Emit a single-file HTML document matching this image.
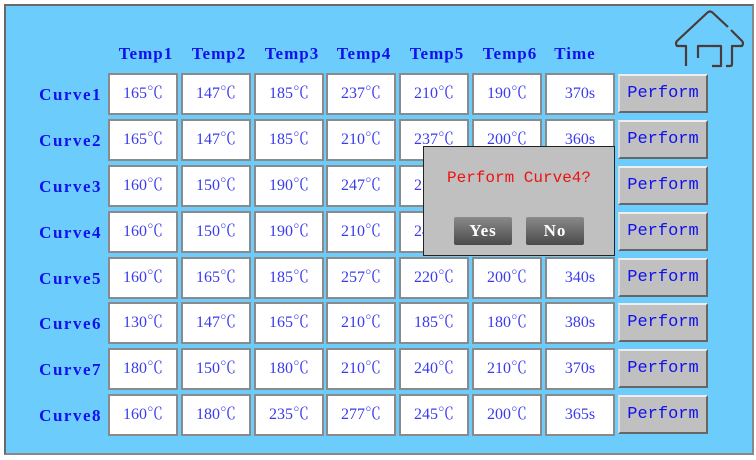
<!DOCTYPE html>
<html><head><meta charset="utf-8"><style>
body{margin:0;width:756px;height:460px;background:#fff;position:relative;overflow:hidden;font-family:"Liberation Serif","Noto Serif CJK SC",serif}
.frame{position:absolute;left:4px;top:4px;width:746px;height:447px;background:#6ccdfd;border:2px solid #6a6a6a;border-right-color:#888;border-bottom-color:#888}
.h{position:absolute;top:44px;width:70px;text-align:center;color:#1010ee;font-weight:bold;font-size:17px;letter-spacing:1px}
.l{position:absolute;left:30px;width:72px;text-align:right;color:#1010ee;font-weight:bold;font-size:17px;letter-spacing:1.5px}
.c{position:absolute;width:66px;height:38px;background:#fff;border:2px solid #8a8a8a;box-sizing:content-box;text-align:center;line-height:38px;color:#3a3aee;font-size:16px}
.p{position:absolute;left:618px;width:86px;height:35px;background:#c0c0c0;border:2px solid;border-color:#eee #666 #666 #ddd;text-align:center;color:#1010ee;font-family:"Liberation Mono",monospace;font-size:17px;line-height:35px}
.dlg{position:absolute;left:423px;top:146px;width:190px;height:108px;background:#c0c0c0;border:1px solid #222}
.btn{position:absolute;top:70px;width:58px;height:28px;background:linear-gradient(#8a8a8a,#4a4a4a);border-radius:2px;color:#fff;text-align:center;font-family:"Liberation Serif",serif;font-weight:bold;font-size:17px;line-height:28px;letter-spacing:1px}
</style></head><body>
<div class="frame"></div>
<svg style="position:absolute;left:670px;top:6px" width="80" height="66" viewBox="670 6 80 66"><g fill="none" stroke="#4a3a3a" stroke-width="2.2" stroke-linejoin="round"><path d="M686 66 V46 H677 Q675 43 677 41 L707 13 Q710 10 713 13 L728 27 M731 30 L742 41 Q744 43 742 46 H732 V64 Q732 66 730 66 H726"/><path d="M698 58 V46 H721 V66 H712"/></g></svg>
<div class="h" style="left:111px">Temp1</div><div class="h" style="left:184px">Temp2</div><div class="h" style="left:257px">Temp3</div><div class="h" style="left:329px">Temp4</div><div class="h" style="left:402px">Temp5</div><div class="h" style="left:475px">Temp6</div><div class="h" style="left:540px">Time</div>

<div class="l" style="top:85px">Curve1</div><div class="l" style="top:131px">Curve2</div><div class="l" style="top:177px">Curve3</div><div class="l" style="top:223px">Curve4</div><div class="l" style="top:269px">Curve5</div><div class="l" style="top:314px">Curve6</div><div class="l" style="top:360px">Curve7</div><div class="l" style="top:406px">Curve8</div>

<div class="c" style="left:108px;top:73px">165℃</div><div class="c" style="left:181px;top:73px">147℃</div><div class="c" style="left:254px;top:73px">185℃</div><div class="c" style="left:326px;top:73px">237℃</div><div class="c" style="left:399px;top:73px">210℃</div><div class="c" style="left:472px;top:73px">190℃</div><div class="c" style="left:545px;top:73px">370s</div>
<div class="c" style="left:108px;top:119px">165℃</div><div class="c" style="left:181px;top:119px">147℃</div><div class="c" style="left:254px;top:119px">185℃</div><div class="c" style="left:326px;top:119px">210℃</div><div class="c" style="left:399px;top:119px">237℃</div><div class="c" style="left:472px;top:119px">200℃</div><div class="c" style="left:545px;top:119px">360s</div>
<div class="c" style="left:108px;top:165px">160℃</div><div class="c" style="left:181px;top:165px">150℃</div><div class="c" style="left:254px;top:165px">190℃</div><div class="c" style="left:326px;top:165px">247℃</div><div class="c" style="left:399px;top:165px">210℃</div><div class="c" style="left:472px;top:165px">200℃</div><div class="c" style="left:545px;top:165px">360s</div>
<div class="c" style="left:108px;top:211px">160℃</div><div class="c" style="left:181px;top:211px">150℃</div><div class="c" style="left:254px;top:211px">190℃</div><div class="c" style="left:326px;top:211px">210℃</div><div class="c" style="left:399px;top:211px">240℃</div><div class="c" style="left:472px;top:211px">200℃</div><div class="c" style="left:545px;top:211px">360s</div>
<div class="c" style="left:108px;top:257px">160℃</div><div class="c" style="left:181px;top:257px">165℃</div><div class="c" style="left:254px;top:257px">185℃</div><div class="c" style="left:326px;top:257px">257℃</div><div class="c" style="left:399px;top:257px">220℃</div><div class="c" style="left:472px;top:257px">200℃</div><div class="c" style="left:545px;top:257px">340s</div>
<div class="c" style="left:108px;top:302px">130℃</div><div class="c" style="left:181px;top:302px">147℃</div><div class="c" style="left:254px;top:302px">165℃</div><div class="c" style="left:326px;top:302px">210℃</div><div class="c" style="left:399px;top:302px">185℃</div><div class="c" style="left:472px;top:302px">180℃</div><div class="c" style="left:545px;top:302px">380s</div>
<div class="c" style="left:108px;top:348px">180℃</div><div class="c" style="left:181px;top:348px">150℃</div><div class="c" style="left:254px;top:348px">180℃</div><div class="c" style="left:326px;top:348px">210℃</div><div class="c" style="left:399px;top:348px">240℃</div><div class="c" style="left:472px;top:348px">210℃</div><div class="c" style="left:545px;top:348px">370s</div>
<div class="c" style="left:108px;top:394px">160℃</div><div class="c" style="left:181px;top:394px">180℃</div><div class="c" style="left:254px;top:394px">235℃</div><div class="c" style="left:326px;top:394px">277℃</div><div class="c" style="left:399px;top:394px">245℃</div><div class="c" style="left:472px;top:394px">200℃</div><div class="c" style="left:545px;top:394px">365s</div>

<div class="p" style="top:74px">Perform</div><div class="p" style="top:120px">Perform</div><div class="p" style="top:166px">Perform</div><div class="p" style="top:212px">Perform</div><div class="p" style="top:258px">Perform</div><div class="p" style="top:303px">Perform</div><div class="p" style="top:349px">Perform</div><div class="p" style="top:395px">Perform</div>

<div class="dlg">
<div style="position:absolute;top:22px;left:0;width:190px;text-align:center;color:#f01010;font-family:'Liberation Mono',monospace;font-size:16px">Perform Curve4?</div>
<div class="btn" style="left:30px">Yes</div><div class="btn" style="left:102px">No</div>
</div>
</body></html>
